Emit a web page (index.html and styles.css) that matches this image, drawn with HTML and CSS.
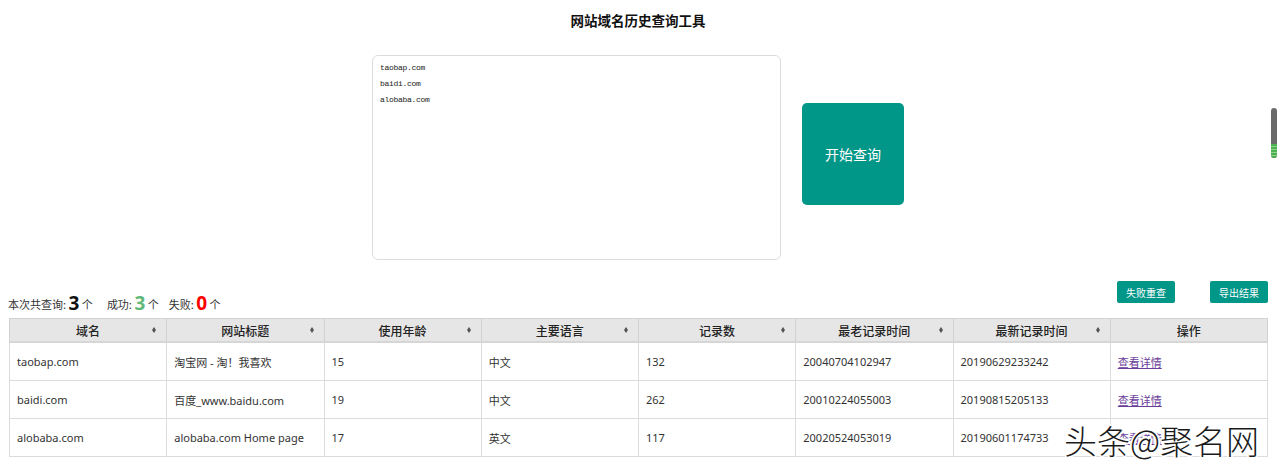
FILE: index.html
```html
<!DOCTYPE html>
<html lang="zh">
<head>
<meta charset="utf-8">
<title>网站域名历史查询工具</title>
<link rel="stylesheet" href="styles.css">
</head>
<body>
<div class="page">
  <h1 class="title">网站域名历史查询工具</h1>
  <div class="query">
    <div class="input-box">
      <div class="line">taobap.com</div>
      <div class="line">baidi.com</div>
      <div class="line">alobaba.com</div>
    </div>
    <button class="start-btn">开始查询</button>
  </div>
  <div class="stats-row">
    <div class="stats">本次共查询: <b class="num">3</b> 个<span class="sp"></span>成功: <b class="num ok">3</b> 个<span class="sp2"></span>失败: <b class="num fail">0</b> 个</div>
    <div class="actions">
      <button class="small-btn">失败重查</button>
      <button class="small-btn">导出结果</button>
    </div>
  </div>
  <div class="table-wrap">
    <table class="result">
      <thead>
        <tr>
          <th>域名<i class="sort"></i></th>
          <th>网站标题<i class="sort"></i></th>
          <th>使用年龄<i class="sort"></i></th>
          <th>主要语言<i class="sort"></i></th>
          <th>记录数<i class="sort"></i></th>
          <th>最老记录时间<i class="sort"></i></th>
          <th>最新记录时间<i class="sort"></i></th>
          <th>操作</th>
        </tr>
      </thead>
      <tbody>
        <tr><td>taobap.com</td><td>淘宝网 - 淘！我喜欢</td><td>15</td><td>中文</td><td>132</td><td>20040704102947</td><td>20190629233242</td><td><a href="#">查看详情</a></td></tr>
        <tr><td>baidi.com</td><td>百度_www.baidu.com</td><td>19</td><td>中文</td><td>262</td><td>20010224055003</td><td>20190815205133</td><td><a href="#">查看详情</a></td></tr>
        <tr><td>alobaba.com</td><td>alobaba.com Home page</td><td>17</td><td>英文</td><td>117</td><td>20020524053019</td><td>20190601174733</td><td><a href="#">查看详情</a></td></tr>
      </tbody>
    </table>
  </div>
</div>
<div class="thumb"><span class="thumb-green"></span></div>
<div class="watermark">头条@聚名网</div>
</body>
</html>
```

FILE: styles.css
```css
html, body {
  margin: 0;
  padding: 0;
  background: #fff;
}
body {
  font-family: "Noto Sans", "Noto Sans CJK SC", sans-serif;
  color: #333;
  font-size: 12px;
  position: relative;
  height: 471px;
  overflow: hidden;
}
.page {
  padding: 0 12px 0 8px;
}
.title {
  margin: 0;
  padding-top: 10px;
  height: 20px;
  line-height: 20px;
  text-align: center;
  font-size: 13.5px;
  font-weight: 700;
  color: #111;
  font-family: "Noto Sans CJK SC", sans-serif;
}
.query {
  margin-top: 25px;
  display: flex;
  justify-content: center;
  align-items: center;
  gap: 21px;
}
.input-box {
  width: 392px;
  height: 197px;
  border: 1px solid #dcdcdc;
  border-radius: 6px;
  padding: 4px 8px 2px 7px;
  font-family: "Liberation Mono", monospace;
  font-size: 8px;
  letter-spacing: -0.3px;
  color: #222;
}
.line {
  height: 16px;
  line-height: 16px;
}
.start-btn {
  width: 102px;
  height: 102px;
  margin-bottom: 7px;
  border: none;
  border-radius: 5px;
  background: #009688;
  color: #fff;
  font-size: 14px;
  font-family: "Noto Sans CJK SC", sans-serif;
}
.stats-row {
  margin-top: 21px;
  display: flex;
  justify-content: space-between;
  align-items: flex-start;
  height: 37px;
}
.stats {
  margin-top: 12px;
  font-family: "Noto Sans CJK SC", sans-serif;
  font-size: 11px;
  color: #333;
  line-height: 20px;
}
.num {
  font-family: "Noto Sans", sans-serif;
  font-size: 19px;
  font-weight: 700;
  color: #111;
  vertical-align: -1px;
}
.num.ok { color: #5fb878; }
.num.fail { color: #ff0000; }
.sp { display: inline-block; width: 14px; }
.sp2 { display: inline-block; width: 10px; }
.actions {
  display: flex;
  gap: 35px;
  padding-right: 0;
}
.small-btn {
  width: 58px;
  height: 22px;
  border: none;
  border-radius: 2px;
  background: #009688;
  color: #fff;
  font-size: 10px;
  font-family: "Noto Sans CJK SC", sans-serif;
  padding: 0;
}
.table-wrap {
  padding-left: 1px;
}
.result {
  width: 100%;
  border-collapse: collapse;
  table-layout: fixed;
  border: 1px solid #d2d2d2;
}
.result th {
  position: relative;
  height: 22px;
  padding: 0;
  background: #e6e6e6;
  border: 1px solid #d2d2d2;
  border-bottom: 2px solid #d6d6d6;
  font-weight: 500;
  font-size: 12px;
  color: #222;
  font-family: "Noto Sans CJK SC", sans-serif;
  text-align: center;
}
.sort {
  position: absolute;
  right: 9px;
  top: 8px;
  width: 5px;
  height: 6px;
}
.sort::before, .sort::after {
  content: "";
  position: absolute;
  left: 0;
  border-left: 2.5px solid transparent;
  border-right: 2.5px solid transparent;
}
.sort::before {
  top: 0;
  border-bottom: 3px solid #555;
}
.sort::after {
  top: 3px;
  border-top: 3px solid #555;
}
.result td {
  height: 37px;
  padding: 0 0 0 7px;
  border: 1px solid #dcdcdc;
  font-size: 11px;
  color: #333;
  font-family: "Noto Sans", "Noto Sans CJK SC", sans-serif;
  white-space: nowrap;
  overflow: hidden;
}
.result a {
  color: #6a3d9a;
  text-decoration: underline;
  font-family: "Noto Sans CJK SC", sans-serif;
}
.thumb {
  position: absolute;
  left: 1271px;
  top: 108px;
  width: 6px;
  height: 50px;
  border-radius: 3px;
  background: #6a6a6a;
  overflow: hidden;
}
.thumb-green {
  position: absolute;
  left: 0;
  bottom: 0;
  width: 6px;
  height: 14px;
  background: repeating-linear-gradient(#4caf50 0 2px, #8fd18f 2px 3px);
}
.watermark {
  position: absolute;
  left: 1064px;
  top: 418px;
  font-family: "Noto Sans CJK SC", sans-serif;
  font-size: 33px;
  line-height: 44px;
  font-weight: 300;
  color: #1a1a1a;
  text-shadow: 1px 1px 0 #fff, -1px -1px 0 #fff, 1px -1px 0 #fff, -1px 1px 0 #fff, 2px 0 0 #fff, -2px 0 0 #fff, 0 2px 0 #fff, 0 -2px 0 #fff;
}
```
